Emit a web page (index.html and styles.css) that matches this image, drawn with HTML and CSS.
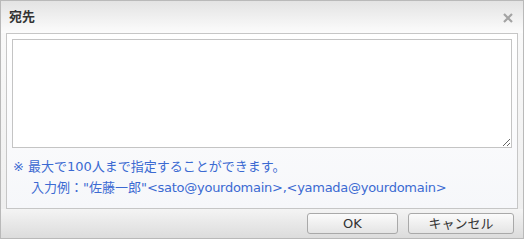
FILE: index.html
```html
<!DOCTYPE html>
<html lang="ja">
<head>
<meta charset="utf-8">
<title>宛先</title>
<link rel="stylesheet" href="styles.css">
</head>
<body>
<div class="dialog">
  <div class="header">
    <span class="title">宛先</span>
    <span class="close" aria-label="close">
      <svg width="10" height="10" viewBox="0 0 10 10">
        <path d="M1 1 L9 9 M9 1 L1 9" stroke="#a3a3a3" stroke-width="2.2" stroke-linecap="butt"/>
      </svg>
    </span>
  </div>
  <div class="body">
    <div class="panel">
      <textarea class="input"></textarea>
      <div class="notes">
        <div class="note">※ 最大で100人まで指定することができます。</div>
        <div class="note indent">入力例："佐藤一郎"<span class="en">&lt;sato@yourdomain&gt;,&lt;yamada@yourdomain&gt;</span></div>
      </div>
    </div>
  </div>
  <div class="footer">
    <button class="btn ok">OK</button>
    <button class="btn cancel">キャンセル</button>
  </div>
</div>
</body>
</html>
```

FILE: styles.css
```css
html, body {
  margin: 0;
  padding: 0;
  background: #ffffff;
}
body {
  font-family: "DejaVu Sans", "Noto Sans CJK JP", sans-serif;
}
.dialog {
  width: 522px;
  height: 237px;
  border: 1px solid #b9b9b9;
  background: #efefef;
  display: flex;
  flex-direction: column;
}
.header {
  height: 32px;
  flex: none;
  display: flex;
  align-items: center;
  justify-content: space-between;
  padding: 0 10px 0 8px;
  background: linear-gradient(#e3e3e3, #fcfcfc);
}
.title {
  font-family: "Noto Sans CJK JP", sans-serif;
  font-size: 13px;
  font-weight: bold;
  color: #333333;
  line-height: 16px;
  margin-top: -2px;
}
.close {
  display: flex;
  width: 10px;
  height: 10px;
  margin-top: 2px;
}
.body {
  flex: none;
  padding: 0 5px;
  background: linear-gradient(#f9f9f9, #efefef);
}
.panel {
  border: 1px solid #c6c6c6;
  background: linear-gradient(#ffffff, #f6f7fa);
  padding: 5px 5px 10px 5px;
  display: flex;
  flex-direction: column;
}
.input {
  display: block;
  box-sizing: border-box;
  width: 500px;
  height: 109px;
  margin: 0;
  border: 1px solid #c4c4c4;
  background: #ffffff;
  padding: 2px;
  outline: none;
  font-family: inherit;
}
.notes {
  margin-top: 8px;
  font-size: 13px;
  line-height: 21px;
  color: #3b6ad2;
}
.note {
  white-space: nowrap;
  padding-left: 1px;
}
.indent {
  padding-left: 19px;
}
.en {
  letter-spacing: -0.27px;
}
.footer {
  flex: 1;
  display: flex;
  justify-content: flex-end;
  align-items: flex-start;
  gap: 10px;
  padding: 4px 9px 0 0;
  background: linear-gradient(#f4f4f4, #dcdcdc);
}
.btn {
  height: 21px;
  box-sizing: border-box;
  border: 1px solid #a9a9a9;
  border-radius: 3px;
  background: linear-gradient(#fbfbfb, #e4e4e4);
  color: #333333;
  font-family: "DejaVu Sans", "Noto Sans CJK JP", sans-serif;
  font-size: 13px;
  line-height: 17px;
  padding: 0;
}
.ok {
  width: 91px;
}
.cancel {
  width: 106px;
}
```
